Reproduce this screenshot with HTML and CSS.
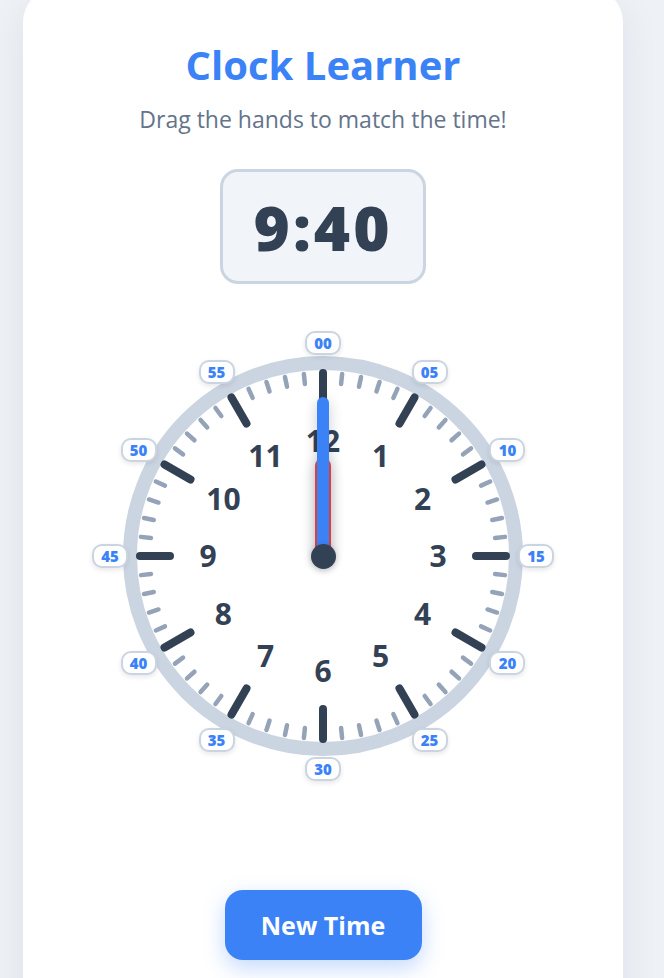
FILE: index.html
```html
<!DOCTYPE html>
<html lang="en">

<head>
    <meta charset="UTF-8">
    <meta name="viewport" content="width=device-width, initial-scale=1.0">
    <title>Clock Learner</title>
    <link rel="stylesheet" href="styles.css">
</head>

<body>
    <div class="card">
        <h1 class="title">Clock Learner</h1>
        <p class="subtitle">Drag the hands to match the time!</p>

        <!-- target time -->
        <div class="target">9:40</div>

        <div class="clock" id="clock">
            <svg class="face" viewBox="-200 -200 400 400">
                <circle class="ring" cx="0" cy="0" r="193"></circle>
                <g id="ticks"></g>
            </svg>
            <div class="hand hour" id="hourHand"></div>
            <div class="hand minute" id="minuteHand"></div>
            <div class="pin"></div>
        </div>

        <button class="btn" type="button">New Time</button>
    </div>

    <script>
        var clock = document.getElementById("clock");
        var ticks = document.getElementById("ticks");
        var NS = "http://www.w3.org/2000/svg";

        // 60 tick marks, every 5th one is an hour mark
        for (var i = 0; i < 60; i++) {
            var big = i % 5 == 0;
            var line = document.createElementNS(NS, "line");
            line.setAttribute("x1", 0);
            line.setAttribute("x2", 0);
            line.setAttribute("y1", big ? -153 : -173);
            line.setAttribute("y2", -183);
            line.setAttribute("transform", "rotate(" + (i * 6) + ")");
            line.setAttribute("class", big ? "tick big" : "tick");
            ticks.appendChild(line);
        }

        // hour numbers and minute labels around the face
        for (var h = 1; h <= 12; h++) {
            var a = h * 30 * Math.PI / 180;
            var num = document.createElement("span");
            num.className = "num";
            num.textContent = h;
            num.style.left = (200 + Math.sin(a) * 115) + "px";
            num.style.top = (200 - Math.cos(a) * 115) + "px";
            clock.insertBefore(num, document.getElementById("hourHand"));
        }
        for (var m = 0; m < 60; m += 5) {
            var b = m * 6 * Math.PI / 180;
            var tag = document.createElement("span");
            tag.className = "mins";
            tag.textContent = (m < 10 ? "0" : "") + m;
            tag.style.left = (200 + Math.sin(b) * 213) + "px";
            tag.style.top = (200 - Math.cos(b) * 213) + "px";
            clock.appendChild(tag);
        }
    </script>
</body>

</html>
```

FILE: styles.css
```css
* {
    box-sizing: border-box;
}

body {
    margin: 0;
    height: 100vh;
    overflow: hidden;
    display: flex;
    align-items: flex-start;
    padding-left: 23px;
    background: #eef2f7;
    font-family: "Open Sans", "Noto Sans", sans-serif;
}

.card {
    width: 600px;
    height: 1060px;
    margin-top: -12px;
    flex-shrink: 0;
    background: #fff;
    border-radius: 34px;
    box-shadow: 0 10px 40px rgba(15, 23, 42, 0.07);
    padding-top: 50px;
    display: flex;
    flex-direction: column;
    align-items: center;
}

.title {
    margin: 0;
    font-size: 40px;
    line-height: 54px;
    font-weight: 700;
    color: #3b82f6;
}

.subtitle {
    margin: 12px 0 0;
    font-size: 23px;
    line-height: 30px;
    color: #64748b;
}

.target {
    margin-top: 35px;
    width: 206px;
    height: 115px;
    display: flex;
    align-items: center;
    justify-content: center;
    background: #f1f5f9;
    border: 3px solid #cbd5e1;
    border-radius: 18px;
    font-size: 62px;
    font-weight: 800;
    letter-spacing: 3px;
    color: #334155;
}

.clock {
    position: relative;
    margin-top: 72px;
    width: 400px;
    height: 400px;
}

.face {
    display: block;
    width: 400px;
    height: 400px;
}

.ring {
    fill: #fff;
    stroke: #cbd5e1;
    stroke-width: 14;
}

.tick {
    stroke: #94a3b8;
    stroke-width: 4.5;
    stroke-linecap: round;
}

.tick.big {
    stroke: #334155;
    stroke-width: 8;
}

.num {
    position: absolute;
    transform: translate(-50%, -50%);
    font-size: 30px;
    font-weight: 700;
    line-height: 1;
    color: #334155;
}

.mins {
    position: absolute;
    transform: translate(-50%, -50%);
    width: 36px;
    height: 24px;
    display: flex;
    align-items: center;
    justify-content: center;
    background: #fff;
    border: 2px solid #cbd5e1;
    border-radius: 10px;
    box-shadow: 0 2px 5px rgba(15, 23, 42, 0.1);
    font-size: 15px;
    font-weight: 800;
    color: #3b82f6;
}

.hand {
    position: absolute;
    left: 50%;
    bottom: 50%;
    transform-origin: 50% 100%;
    box-shadow: 0 4px 14px rgba(15, 23, 42, 0.22);
}

.hand.hour {
    width: 16px;
    height: 98px;
    margin-left: -8px;
    background: #ef4444;
    border-radius: 8px 8px 4px 4px;
}

.hand.minute {
    width: 12px;
    height: 159px;
    margin-left: -6px;
    background: #3b82f6;
    border-radius: 6px 6px 3px 3px;
}

.pin {
    position: absolute;
    left: 50%;
    top: 50%;
    width: 25px;
    height: 25px;
    margin: -12.5px 0 0 -12.5px;
    border-radius: 50%;
    background: #334155;
    box-shadow: 0 2px 6px rgba(15, 23, 42, 0.25);
}

.btn {
    margin-top: 134px;
    width: 197px;
    height: 70px;
    border: none;
    border-radius: 18px;
    background: #3b82f6;
    color: #fff;
    font-family: inherit;
    font-size: 25px;
    font-weight: 700;
    box-shadow: 0 8px 22px rgba(59, 130, 246, 0.3);
    cursor: pointer;
}
```
